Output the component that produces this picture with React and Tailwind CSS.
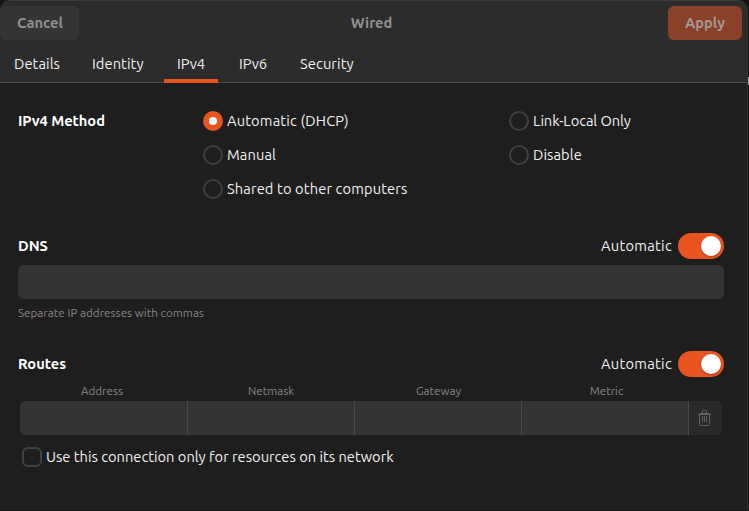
const FONT = "font-['Ubuntu','Noto_Sans',sans-serif]";

function Tab({ label, className, active }) {
  return (
    <div className={`relative flex h-full items-center whitespace-nowrap pt-px ${className}`}>
      {label}
      {active && <span className="absolute -bottom-px left-0 h-1 w-full bg-[#e95420]" />}
    </div>
  );
}

function Radio({ label, checked, className = "" }) {
  return (
    <label className="flex h-[34px] items-center gap-1 whitespace-nowrap">
      {checked ? (
        <span className="flex size-5 shrink-0 items-center justify-center rounded-full bg-[#e95420]">
          <span className="size-2 rounded-full bg-white" />
        </span>
      ) : (
        <span className="size-5 shrink-0 rounded-full border-2 border-[#3f3f3f]" />
      )}
      <span className={className}>{label}</span>
    </label>
  );
}

function SectionHead({ title }) {
  return (
    <div className="flex h-[26px] items-center">
      <h2 className="flex-1 font-semibold text-white">{title}</h2>
      <span className="mr-[6px] tracking-[0.28px]">Automatic</span>
      <span className="flex h-[26px] w-[46px] items-center justify-end rounded-full bg-[#e95420] pr-[3px]">
        <span className="size-5 rounded-full bg-white shadow-[0_1px_2px_rgba(0,0,0,0.3)]" />
      </span>
    </div>
  );
}

function Trash() {
  return (
    <svg width="13" height="16" viewBox="0 0 13 16" fill="none" stroke="#606060">
      <path d="M0 4.5H13M1.5 3.5H11.5M4.5 3V1.5Q4.5 0.5 5.5 0.5H7.5Q8.5 0.5 8.5 1.5V3M1.5 5V14.5Q1.5 15.5 2.5 15.5H10.5Q11.5 15.5 11.5 14.5V5M4.5 6V12M6.5 6V12M8.5 6V12" />
    </svg>
  );
}

export default function App() {
  return (
    <div className={`relative h-[511px] w-[749px] overflow-hidden bg-[#141414] pr-px pb-px text-[14.667px] leading-5 text-[#f0f0f0] ${FONT}`}>
      <span className="absolute top-[77px] right-0 h-2 w-px bg-[#a0a0a0]" />
      <div className="flex h-full flex-col overflow-hidden rounded-t-[10px] border-t border-r border-[#3b3b3b] border-r-[#303030] bg-[#1e1e1e]">
        <header className="flex h-[82px] shrink-0 flex-col border-b border-[#4b4b4b] bg-[#2c2c2c]">
          <div className="flex h-[44px] items-center justify-between pr-[5px] font-semibold text-[#919191]">
            <button className="h-[34px] w-[79px] rounded-md bg-[#353535] pl-px">Cancel</button>
            <span className="mr-[4px]">Wired</span>
            <button className="h-[34px] w-[74px] rounded-md bg-[#8a4029] text-[#a39a96]">Apply</button>
          </div>
          <nav className="flex h-[37px]">
            <Tab label="Details" className="w-[78px] pl-[14px] tracking-[0.08px]" />
            <Tab label="Identity" className="w-[86px] pl-[14px] tracking-[0.08px]" />
            <Tab label="IPv4" className="w-[54px] pl-[13px]" active />
            <Tab label="IPv6" className="w-[69px] pl-[21px]" />
            <Tab label="Security" className="w-[80px] pl-[13px] tracking-[0.1px]" />
          </nav>
        </header>
        <main className="flex flex-col pt-[21px] pr-[23px] pl-[18px]">
          <section className="grid grid-cols-[185px_306px_1fr]">
            <h2 className="flex h-[34px] items-center font-semibold tracking-[-0.06px] text-white">IPv4 Method</h2>
            <div>
              <Radio label="Automatic (DHCP)" className="tracking-[0.16px]" checked />
              <Radio label="Manual" className="tracking-[0.1px]" />
              <Radio label="Shared to other computers" className="tracking-[0.13px]" />
            </div>
            <div>
              <Radio label="Link-Local Only" className="tracking-[-0.08px]" />
              <Radio label="Disable" className="tracking-[0.08px]" />
            </div>
          </section>
          <section className="mt-[27px]">
            <SectionHead title="DNS" />
            <div className="mt-[6px] h-[34px] rounded-md bg-[#343434]" />
            <p className="mt-[4px] text-[11.6px] leading-5 tracking-[0.03px] text-[#878787]">Separate IP addresses with commas</p>
          </section>
          <section className="mt-[28px]">
            <SectionHead title="Routes" />
            <div className="mt-[4px] ml-[2px] grid grid-cols-[167px_167px_168px_166px] text-center text-[11.6px] leading-5 text-[#878787]">
              <span className="pr-[3px]">Address</span>
              <span className="pl-px">Netmask</span>
              <span className="pl-px">Gateway</span>
              <span className="pl-[3px]">Metric</span>
            </div>
            <div className="mr-[2px] ml-[2px] grid h-[34px] grid-cols-[168px_167px_167px_167px_33px] overflow-hidden rounded-md bg-[#343434]">
              <div className="border-r border-[#4a4a4a]" />
              <div className="border-r border-[#4a4a4a]" />
              <div className="border-r border-[#4a4a4a]" />
              <div className="border-r border-[#4a4a4a]" />
              <div className="flex items-center bg-[#292929] pl-[9px]">
                <Trash />
              </div>
            </div>
            <label className="mt-3 ml-1 flex h-5 items-center gap-1 whitespace-nowrap">
              <span className="size-5 rounded-[6px] border-2 border-[#3f3f3f]" />
              <span>Use this connection only for resources on its network</span>
            </label>
          </section>
        </main>
      </div>
    </div>
  );
}
